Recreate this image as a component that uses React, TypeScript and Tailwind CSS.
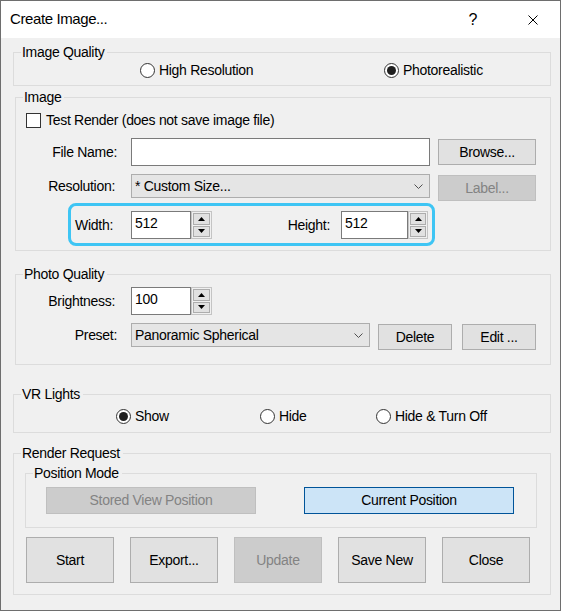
import type { ReactNode } from "react";

type GroupProps = {
  label: string;
  className?: string;
  children?: ReactNode;
};

// Windows-style group box: 1px light border with the caption sitting on the top edge
function Group({ label, className, children }: GroupProps) {
  return (
    <div className={"relative border border-[#dcdcdc] " + (className ?? "")}>
      <span className="absolute left-[7px] -top-[9px] bg-[#f0f0f0] pl-[1px] pr-[3px] leading-[16px] whitespace-nowrap">
        {label}
      </span>
      {children}
    </div>
  );
}

function Radio({ label, checked, className }: { label: string; checked?: boolean; className?: string }) {
  return (
    <div className={"flex items-center " + (className ?? "")}>
      <span className="w-[15px] h-[15px] rounded-full border border-[#333333] bg-white flex items-center justify-center shrink-0">
        {checked && <span className="w-[9px] h-[9px] rounded-full bg-[#1f1f1f]" />}
      </span>
      <span className="ml-[4px] whitespace-nowrap">{label}</span>
    </div>
  );
}

function Btn({ children, className, disabled, active }: { children: ReactNode; className?: string; disabled?: boolean; active?: boolean }) {
  const tone = disabled
    ? "bg-[#cccccc] border-[#bfbfbf] text-[#838383]"
    : active
      ? "bg-[#cce4f7] border-[#005499] text-black"
      : "bg-[#e1e1e1] border-[#adadad] text-black";
  return (
    <div className={"flex items-center justify-center border shrink-0 whitespace-nowrap " + tone + " " + (className ?? "")}>
      {children}
    </div>
  );
}

function FieldLabel({ children, className }: { children: ReactNode; className: string }) {
  return <div className={"text-right whitespace-nowrap shrink-0 " + className}>{children}</div>;
}

function Chevron() {
  return (
    <svg width="9" height="5" viewBox="0 0 9 5" className="shrink-0">
      <polyline points="0.5,0.5 4.5,4.5 8.5,0.5" fill="none" stroke="#505050" strokeWidth="1" />
    </svg>
  );
}

function Combo({ value, className }: { value: string; className: string }) {
  return (
    <div className={"flex items-center border border-[#adadad] bg-[#e5e5e5] pl-[3px] pr-[6px] shrink-0 " + className}>
      <span className="flex-1 whitespace-nowrap">{value}</span>
      <Chevron />
    </div>
  );
}

function Arrow({ up }: { up?: boolean }) {
  return (
    <svg width="7" height="4" viewBox="0 0 7 4">
      <polygon points={up ? "3.5,0 7,4 0,4" : "0,0 7,0 3.5,4"} fill="#000" />
    </svg>
  );
}

function Spinner({ value, inputW, spinW }: { value: string; inputW: string; spinW: string }) {
  return (
    <div className="flex shrink-0">
      <input
        readOnly
        value={value}
        className={"h-[28px] border border-[#7a7a7a] bg-white pl-[3px] pb-[5px] outline-none " + inputW}
      />
      <div className={"h-[28px] flex flex-col border border-[#c4c4c4] p-[1px] gap-[1px] " + spinW}>
        <div className="flex-1 flex items-center justify-center bg-[#e1e1e1] border border-[#adadad]">
          <Arrow up />
        </div>
        <div className="flex-1 flex items-center justify-center bg-[#e1e1e1] border border-[#adadad]">
          <Arrow />
        </div>
      </div>
    </div>
  );
}

export default function App() {
  return (
    <div className="w-[562px] h-[611px] bg-white font-['Liberation_Sans',Arial,sans-serif] text-[14px] tracking-[-0.3px] text-black">
      <div className="w-[561px] h-[611px] border border-[#6e6e6e] bg-[#f0f0f0] flex flex-col">
        {/* Title bar */}
        <div className="h-[37px] bg-white flex items-center shrink-0">
          <span className="ml-[9px] text-[15px] tracking-[-0.4px]">Create Image...</span>
          <span className="ml-auto text-[16px]">?</span>
          <svg width="10" height="10" viewBox="0 0 10 10" className="ml-[51px] mr-[22px]">
            <line x1="0.5" y1="0.5" x2="9.5" y2="9.5" stroke="#000" strokeWidth="1" />
            <line x1="9.5" y1="0.5" x2="0.5" y2="9.5" stroke="#000" strokeWidth="1" />
          </svg>
        </div>

        {/* Image Quality */}
        <Group label="Image Quality" className="ml-[12px] mt-[14px] w-[538px] h-[34px] flex items-center pt-[3px] pl-[126px]">
          <Radio label="High Resolution" className="w-[244px]" />
          <Radio label="Photorealistic" checked />
        </Group>

        {/* Image */}
        <Group label="Image" className="ml-[14px] mt-[11px] w-[536px] h-[154px] pt-[14px]">
          <div className="flex items-center h-[16px] ml-[10px]">
            <span className="w-[15px] h-[15px] border border-[#333333] bg-white shrink-0" />
            <span className="ml-[5px] whitespace-nowrap">Test Render (does not save image file)</span>
          </div>

          <div className="flex items-center mt-[10px]">
            <FieldLabel className="w-[115px] pr-[14px]">File Name:</FieldLabel>
            <input readOnly value="" className="w-[299px] h-[28px] border border-[#7a7a7a] bg-white outline-none" />
            <Btn className="ml-[8px] w-[98px] h-[26px]">Browse...</Btn>
          </div>

          <div className="flex items-start h-[27px] mt-[8px]">
            <FieldLabel className="w-[115px] pr-[16px] leading-[24px]">Resolution:</FieldLabel>
            <Combo value="* Custom Size..." className="w-[299px] h-[24px]" />
            <Btn disabled className="ml-[8px] mt-[1px] w-[98px] h-[26px]">Label...</Btn>
          </div>

          <div className="ml-[52px] mt-[2px] w-[367px] h-[43px] border-[3px] border-[#3ec5f4] rounded-[8px] pt-[1px] flex items-center">
            <FieldLabel className="w-[60px] pr-[18px]">Width:</FieldLabel>
            <Spinner value="512" inputW="w-[60px]" spinW="w-[21px]" />
            <FieldLabel className="w-[129px] pr-[11px]">Height:</FieldLabel>
            <Spinner value="512" inputW="w-[67px]" spinW="w-[20px]" />
          </div>
        </Group>

        {/* Photo Quality */}
        <Group label="Photo Quality" className="ml-[14px] mt-[23px] w-[536px] h-[91px] pt-[12px]">
          <div className="flex items-center">
            <FieldLabel className="w-[115px] pr-[16px]">Brightness:</FieldLabel>
            <Spinner value="100" inputW="w-[60px]" spinW="w-[21px]" />
          </div>
          <div className="flex items-start h-[27px] mt-[8px]">
            <FieldLabel className="w-[115px] pr-[14px] leading-[24px]">Preset:</FieldLabel>
            <Combo value="Panoramic Spherical" className="w-[239px] h-[24px]" />
            <Btn className="ml-[8px] mt-[1px] w-[74px] h-[26px]">Delete</Btn>
            <Btn className="ml-[10px] mt-[1px] w-[74px] h-[26px]">Edit ...</Btn>
          </div>
        </Group>

        {/* VR Lights */}
        <Group label="VR Lights" className="ml-[12px] mt-[29px] w-[538px] h-[39px] flex items-center pt-[6px] pl-[102px]">
          <Radio label="Show" checked className="w-[144px]" />
          <Radio label="Hide" className="w-[116px]" />
          <Radio label="Hide & Turn Off" />
        </Group>

        {/* Render Request */}
        <Group label="Render Request" className="ml-[12px] mt-[20px] w-[538px] h-[142px] pt-[19px]">
          <Group label="Position Mode" className="ml-[11px] w-[512px] h-[55px] pt-[13px] pl-[20px] flex items-start">
            <Btn disabled className="w-[210px] h-[27px]">Stored View Position</Btn>
            <Btn active className="ml-[48px] w-[210px] h-[27px]">Current Position</Btn>
          </Group>
          <div className="flex gap-[16px] ml-[12px] mt-[9px]">
            <Btn className="w-[88px] h-[46px]">Start</Btn>
            <Btn className="w-[88px] h-[46px]">Export...</Btn>
            <Btn disabled className="w-[88px] h-[46px]">Update</Btn>
            <Btn className="w-[88px] h-[46px]">Save New</Btn>
            <Btn className="w-[88px] h-[46px]">Close</Btn>
          </div>
        </Group>
      </div>
    </div>
  );
}
